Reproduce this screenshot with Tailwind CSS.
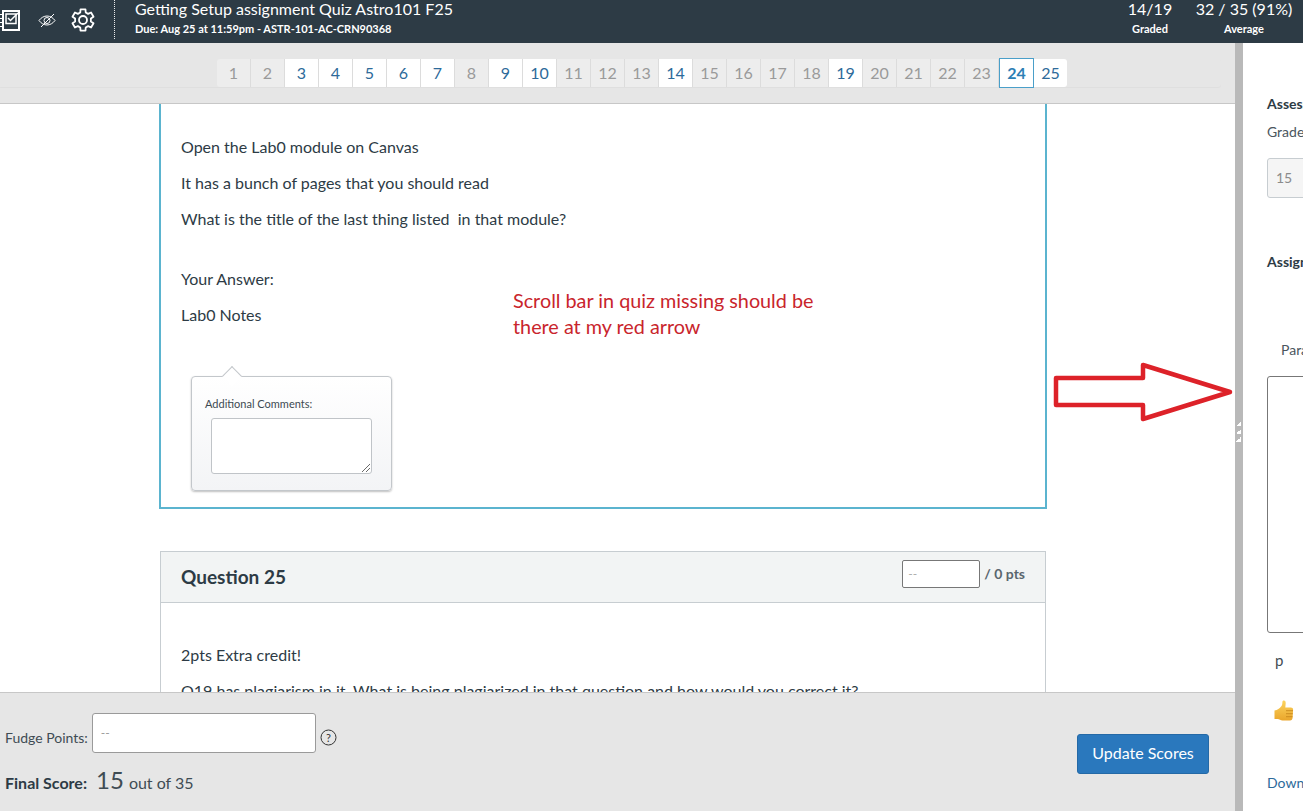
<!DOCTYPE html>
<html lang="en">
<head>
<meta charset="utf-8">
<title>SpeedGrader</title>
<script src="https://cdn.jsdelivr.net/npm/@tailwindcss/browser@4"></script>
</head>
<body class="m-0 overflow-hidden bg-white font-['Lato','Noto_Sans',sans-serif] text-[#2d3b45]">
<div class="relative flex h-[811px] w-[1303px] flex-col overflow-hidden">
  <!-- Header -->
  <header class="flex h-[43px] shrink-0 items-start overflow-hidden bg-[#2d3b45] text-white">
    <div class="mb-[4px] flex h-[39px] w-[115px] shrink-0 items-center border-r border-dotted border-white/90">
      <svg class="mt-[1px] h-[24px] w-[20px] shrink-0" viewBox="0 0 20 24" fill="none" stroke="#fff">
        <path d="M3 3h16v19H3z" stroke-width="2"/>
        <path d="M6 6h10v9.500H6z" stroke-width="1.500"/>
        <path d="M8 10l2.500 2.500L18 5" stroke-width="1.500"/>
        <path d="M0 6.500h3M0 10.500h3M0 14.500h3M0 18.500h3" stroke-width="1.200"/>
      </svg>
      <svg class="ml-[18px] mt-[1px] h-[18px] w-[18px] shrink-0" viewBox="0 0 18 18" fill="none" stroke="#fff" stroke-width="1">
        <path d="M1 9.500c2-2.800 5-4.500 8-4.500s6 1.700 8 4.500c-2 2.800-5 4.500-8 4.500s-6-1.700-8-4.500z"/><circle cx="9" cy="9.500" r="3"/><path d="M3 16L16 3"/>
      </svg>
      <svg class="ml-[15px] h-[24px] w-[24px] shrink-0" viewBox="0 0 24 24" fill="none" stroke="#fff" stroke-width="1.800" stroke-linejoin="round">
        <circle cx="12" cy="12" r="4"/>
        <path d="M9.260 4.480L9.520 1.280H14.480L14.740 4.480L17.140 5.870L20.040 4.500L22.520 8.780L19.880 10.610V13.390L22.520 15.220L20.040 19.500L17.140 18.130L14.740 19.520L14.480 22.720H9.520L9.260 19.520L6.860 18.130L3.960 19.500L1.480 15.220L4.120 13.390V10.610L1.480 8.780L3.960 4.500L6.860 5.870z"/>
      </svg>
    </div>
    <div class="ml-[20px] mt-[-1px] flex flex-col">
      <div class="text-[16px] font-normal leading-[20px]">Getting Setup assignment Quiz Astro101 F25</div>
      <div class="mt-[3px] text-[11px] font-bold leading-[14px]">Due: Aug 25 at 11:59pm - ASTR-101-AC-CRN90368</div>
    </div>
    <div class="ml-auto mt-[-1px] flex shrink-0 items-start pr-[9px]">
      <div class="flex w-[60px] flex-col items-center">
        <div class="text-[16px] leading-[20px]">14/19</div>
        <div class="mt-[3px] text-[11px] font-bold leading-[14px]">Graded</div>
      </div>
      <div class="ml-[14px] flex w-[100px] flex-col items-center">
        <div class="whitespace-nowrap text-[16px] leading-[20px]">32 / 35 (91%)</div>
        <div class="mt-[3px] text-[11px] font-bold leading-[14px]">Average</div>
      </div>
    </div>
  </header>

  <div class="flex min-h-0 flex-1">
    <!-- Left column -->
    <main class="flex w-[1235px] shrink-0 flex-col">
      <!-- Pagination -->
      <div class="h-[61px] shrink-0 border-b border-[#c7c7c7] bg-[#e6e6e6] pt-[16px]">
        <div class="flex h-[28px] w-[1221px] rounded-r-[3px] bg-[#e6e6e6] pl-[217px] shadow-[0_1px_1px_rgba(0,0,0,0.03)]">
          <a class="flex w-[34px] items-center justify-center rounded-l-[3px] border-r border-[#dcdcdc] bg-[#ededed] text-[16px] text-[#9a9a9a]">1</a>
          <a class="flex w-[34px] items-center justify-center border-r border-[#dcdcdc] bg-[#ededed] text-[16px] text-[#9a9a9a]">2</a>
          <a class="flex w-[34px] items-center justify-center border-r border-[#dcdcdc] bg-white text-[16px] text-[#2d6a9a]">3</a>
          <a class="flex w-[34px] items-center justify-center border-r border-[#dcdcdc] bg-white text-[16px] text-[#2d6a9a]">4</a>
          <a class="flex w-[34px] items-center justify-center border-r border-[#dcdcdc] bg-white text-[16px] text-[#2d6a9a]">5</a>
          <a class="flex w-[34px] items-center justify-center border-r border-[#dcdcdc] bg-white text-[16px] text-[#2d6a9a]">6</a>
          <a class="flex w-[34px] items-center justify-center border-r border-[#dcdcdc] bg-white text-[16px] text-[#2d6a9a]">7</a>
          <a class="flex w-[34px] items-center justify-center border-r border-[#dcdcdc] bg-[#ededed] text-[16px] text-[#9a9a9a]">8</a>
          <a class="flex w-[34px] items-center justify-center border-r border-[#dcdcdc] bg-white text-[16px] text-[#2d6a9a]">9</a>
          <a class="flex w-[34px] items-center justify-center border-r border-[#dcdcdc] bg-white text-[16px] text-[#2d6a9a]">10</a>
          <a class="flex w-[34px] items-center justify-center border-r border-[#dcdcdc] bg-[#ededed] text-[16px] text-[#9a9a9a]">11</a>
          <a class="flex w-[34px] items-center justify-center border-r border-[#dcdcdc] bg-[#ededed] text-[16px] text-[#9a9a9a]">12</a>
          <a class="flex w-[34px] items-center justify-center border-r border-[#dcdcdc] bg-[#ededed] text-[16px] text-[#9a9a9a]">13</a>
          <a class="flex w-[34px] items-center justify-center border-r border-[#dcdcdc] bg-white text-[16px] text-[#2d6a9a]">14</a>
          <a class="flex w-[34px] items-center justify-center border-r border-[#dcdcdc] bg-[#ededed] text-[16px] text-[#9a9a9a]">15</a>
          <a class="flex w-[34px] items-center justify-center border-r border-[#dcdcdc] bg-[#ededed] text-[16px] text-[#9a9a9a]">16</a>
          <a class="flex w-[34px] items-center justify-center border-r border-[#dcdcdc] bg-[#ededed] text-[16px] text-[#9a9a9a]">17</a>
          <a class="flex w-[34px] items-center justify-center border-r border-[#dcdcdc] bg-[#ededed] text-[16px] text-[#9a9a9a]">18</a>
          <a class="flex w-[34px] items-center justify-center border-r border-[#dcdcdc] bg-white text-[16px] text-[#2d6a9a]">19</a>
          <a class="flex w-[34px] items-center justify-center border-r border-[#dcdcdc] bg-[#ededed] text-[16px] text-[#9a9a9a]">20</a>
          <a class="flex w-[34px] items-center justify-center border-r border-[#dcdcdc] bg-[#ededed] text-[16px] text-[#9a9a9a]">21</a>
          <a class="flex w-[34px] items-center justify-center border-r border-[#dcdcdc] bg-[#ededed] text-[16px] text-[#9a9a9a]">22</a>
          <a class="flex w-[34px] items-center justify-center border-r border-[#dcdcdc] bg-[#ededed] text-[16px] text-[#9a9a9a]">23</a>
          <a class="mt-[-1px] flex h-[30px] w-[35px] items-center justify-center border border-[#4a9fc9] bg-white text-[16px] font-bold text-[#2d7fb5]">24</a>
          <a class="flex w-[33px] items-center justify-center rounded-r-[3px] bg-white text-[16px] text-[#2d6a9a]">25</a>
        </div>
      </div>

      <!-- Questions -->
      <div class="min-h-0 flex-1 overflow-hidden bg-white pl-[159px] text-[16px]">
        <section class="h-[405px] w-[888px] border-2 border-t-0 border-[#5bb4cf] px-[20px] pt-[31px]">
          <p class="leading-[24px]">Open the Lab0 module on Canvas</p>
          <p class="mt-[12px] leading-[24px]">It has a bunch of pages that you should read</p>
          <p class="mt-[12px] leading-[24px]">What is the title of the last thing listed&nbsp; in that module?</p>
          <p class="mt-[36px] leading-[24px]">Your Answer:</p>
          <p class="mt-[12px] leading-[24px]">Lab0 Notes</p>
          <div class="relative ml-[10px] mt-[49px] h-[115px] w-[201px] rounded-[4px] border border-[#c3c7cb] bg-gradient-to-b from-white to-[#f3f4f6] shadow-[0_1px_2px_rgba(0,0,0,0.25)]">
            <span class="absolute left-[33px] top-[-8px] h-[14px] w-[14px] rotate-45 border-l border-t border-[#c3c7cb] bg-white"></span>
            <label class="absolute left-[13px] top-[20px] text-[11px] leading-[14px] text-[#3d4a52]">Additional Comments:</label>
            <div class="absolute left-[19px] top-[41px] h-[56px] w-[161px] rounded-[3px] border border-[#c0c4c8] bg-white">
              <svg class="absolute bottom-[1px] right-[1px] h-[8px] w-[8px]" viewBox="0 0 8 8" stroke="#444" stroke-width=".8"><path d="M0 8L8 0M4 8L8 4"/></svg>
            </div>
          </div>
        </section>
        <section class="ml-[1px] mt-[42px] h-[300px] w-[886px] border border-[#c7cdd1]">
          <div class="flex h-[51px] items-center justify-between border-b border-[#c7cdd1] bg-[#f2f4f4] pl-[20px] pr-[20px]">
            <h2 class="mt-[-1px] text-[19px] font-bold leading-[24px]">Question 25</h2>
            <div class="flex items-center self-start pt-[8px] text-[14px] font-bold text-[#5a666e]">
              <span class="flex h-[28px] w-[78px] items-center rounded-[2px] border border-[#777] bg-white pl-[5px] text-[12px] font-normal text-[#aaa]">--</span>
              <span class="ml-[4px] mt-[-2px] font-bold">/ 0 pts</span>
            </div>
          </div>
          <div class="px-[20px] pt-[40px]">
            <p class="leading-[24px]">2pts Extra credit!</p>
            <p class="mt-[12px] whitespace-nowrap leading-[24px]">Q19 has plagiarism in it. What is being plagiarized in that question and how would you correct it?</p>
          </div>
        </section>
      </div>

      <!-- Footer -->
      <footer class="relative flex h-[119px] shrink-0 items-start justify-between border-t border-[#c7c7c7] bg-[#e6e6e6] pl-[5px] pr-[26px] pt-[20px]">
        <div class="flex flex-col">
          <div class="flex items-start text-[14px] text-[#3f4c54]">
            <span class="mt-[15px] leading-[20px]">Fudge Points:</span>
            <span class="ml-[4px] flex h-[40px] w-[224px] items-start rounded-[3px] border border-[#9a9a9a] bg-white pl-[8px] pt-[10px] text-[12px] text-[#999]">--</span>
            <svg class="ml-[4px] mt-[16px] h-[17px] w-[17px]" viewBox="0 0 17 17" fill="none" stroke="#333"><circle cx="8.500" cy="8.500" r="7.500"/><text x="8.500" y="12.500" font-size="11" text-anchor="middle" fill="#333" stroke="none" font-family="Lato">?</text></svg>
          </div>
          <div class="mt-[10px] flex items-baseline">
            <span class="text-[16px] font-bold text-[#2d3b45]">Final Score:</span>
            <span class="ml-[9px] text-[24px] leading-[34px] text-[#3f4c54]">15</span>
            <span class="ml-[5px] text-[16px] text-[#3f4c54]">out of 35</span>
          </div>
        </div>
        <button class="mt-[21px] h-[40px] w-[132px] rounded-[3px] border border-[#2469a6] bg-[#2a78bd] pb-[2px] text-[16px] text-white">Update Scores</button>
      </footer>
    </main>

    <!-- Divider -->
    <div class="relative w-[8px] shrink-0 bg-[#b9b9b9]">
      <div class="absolute left-[1px] top-[378px] flex flex-col gap-[3px]">
        <span class="h-[5px] w-[5px] bg-gradient-to-br from-[#b9b9b9] from-50% to-white to-50%"></span>
        <span class="h-[5px] w-[5px] bg-gradient-to-br from-[#b9b9b9] from-50% to-white to-50%"></span>
        <span class="h-[5px] w-[5px] bg-gradient-to-br from-[#b9b9b9] from-50% to-white to-50%"></span>
      </div>
    </div>

    <!-- Right panel -->
    <aside class="min-w-0 flex-1 overflow-hidden bg-white pl-[24px] pt-[51px] text-[15px]">
      <div class="w-[36px]">
        <h3 class="whitespace-nowrap text-[14px] font-bold leading-[20px] text-[#2d3b45]">Assessment</h3>
        <p class="mt-[8px] whitespace-nowrap text-[14px] leading-[20px] text-[#4a565e]">Grade out of 35</p>
        <div class="mt-[16px] flex h-[40px] w-[120px] items-center rounded-[3px] border border-[#c7cdd1] bg-[#f5f5f5] pb-[2px] pl-[8px] text-[14px] text-[#8b8b8b]">15</div>
        <h3 class="mt-[54px] whitespace-nowrap text-[14px] font-bold leading-[20px] text-[#2d3b45]">Assignment Comments</h3>
        <p class="mt-[68px] whitespace-nowrap pl-[14px] text-[14px] leading-[20px] text-[#4a565e]">Paragraph</p>
        <div class="mt-[16px] h-[257px] w-[280px] rounded-[3px] border border-[#777]"></div>
        <p class="mt-[16px] pl-[8px] text-[15px] leading-[22px] text-[#3f4c54]">p</p>
        <svg class="ml-[7px] mt-[29px] h-[21px] w-[20px]" viewBox="0 0 20 21">
          <defs><linearGradient id="th" x1="0" y1="0" x2="0" y2="1"><stop offset="0" stop-color="#fcd45e"/><stop offset="1" stop-color="#eaa62c"/></linearGradient></defs>
          <path d="M9.800 .500c1.500 0 2 1.300 1.900 2.800L11.300 7.500h5.500c1.400 0 2.400.900 2.300 2.200l-.5 8c-.1 1.600-1 2.700-2.600 2.700H8.500c-2 0-3-1.200-5-1.500H.500V10.500c3-.500 5-2 7-4.500 1-1.400.800-3 .9-4 .1-1 .500-1.500 1.400-1.500z" fill="url(#th)"/>
          <path d="M12 10.700h7M12 13.700h6.800M12 16.700h6.500" stroke="#c98a1e" stroke-width=".9"/>
        </svg>
        <p class="mt-[52px] whitespace-nowrap text-[14px] leading-[20px] text-[#2d6a9a]">Download Submission Comments</p>
      </div>
    </aside>
  </div>

  <!-- Screenshot annotation overlay -->
  <div class="absolute left-[513px] top-[287px] w-[330px] text-[19.8px] leading-[26px] text-[#c9252c]">Scroll bar in quiz missing should be<br>there at my red arrow</div>
  <svg class="absolute left-[1050px] top-[358px] h-[68px] w-[190px]" viewBox="0 0 190 68" fill="none" stroke="#dd2229" stroke-width="4.500" stroke-linejoin="round">
    <path d="M6 20H93V7L180 34L93 61V47H6z"/>
  </svg>
</div>
</body>
</html>
